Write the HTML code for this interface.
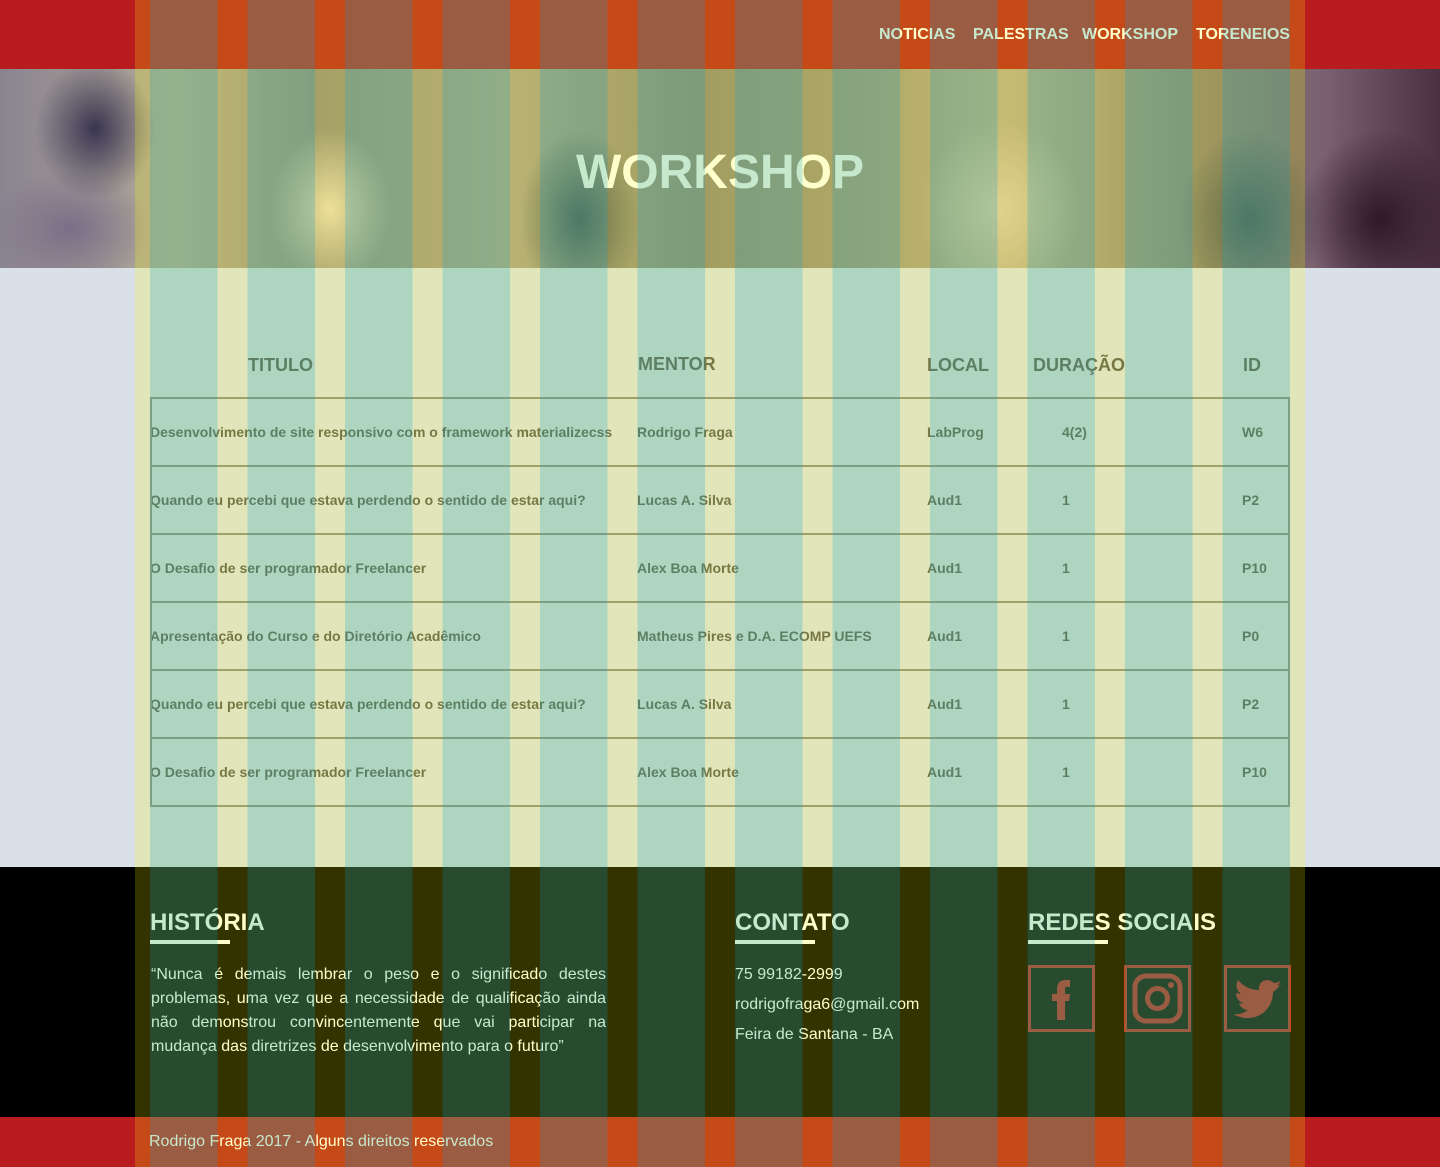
<!DOCTYPE html>
<html><head><meta charset="utf-8"><style>
*{margin:0;padding:0;box-sizing:border-box}
body{width:1440px;height:1167px;position:relative;background:#d9e0e8;font-family:"Liberation Sans",Arial,sans-serif;overflow:hidden}
header{position:absolute;top:0;left:0;width:1440px;height:69px;background:#b81c1e}
nav{position:absolute;top:26px;left:879px;font-size:16px;font-weight:bold;color:#fff;white-space:nowrap}
nav span{position:absolute}
.hero{position:absolute;top:69px;left:0;width:1440px;height:199px;
background:
radial-gradient(ellipse 60px 70px at 95px 60px,#3a3550 0%,transparent 100%),
radial-gradient(ellipse 80px 60px at 70px 160px,#7a6f88 0%,transparent 100%),
radial-gradient(ellipse 60px 80px at 330px 140px,#e8d8c0 0%,transparent 100%),
radial-gradient(ellipse 60px 90px at 580px 150px,#3a4a55 0%,transparent 100%),
radial-gradient(ellipse 80px 90px at 1000px 140px,#d8c8b0 0%,transparent 100%),
radial-gradient(ellipse 70px 90px at 1250px 150px,#3a4a58 0%,transparent 100%),
radial-gradient(ellipse 80px 90px at 1380px 150px,#301828 0%,transparent 100%),
linear-gradient(90deg,#8a8490 0%,#b0a898 12%,#8f8a80 22%,#a8a090 35%,#8a8478 48%,#9a9280 60%,#b8aa90 70%,#8a8478 82%,#7a6070 92%,#4a3040 100%)}
.hero h1{position:absolute;top:76px;left:0;width:1440px;text-align:center;color:#fff;font-size:48px;font-weight:bold}
.th{position:absolute;top:355px;font-size:18px;font-weight:bold;color:#555}
table{position:absolute;top:397px;left:150px;width:1140px;border-collapse:collapse;table-layout:fixed}
td{height:68px;border-top:2px solid #888;border-bottom:2px solid #888;font-size:14px;font-weight:bold;color:#555;padding:0;vertical-align:middle;white-space:nowrap}
.tbl{position:absolute;top:397px;left:150px;width:1140px;height:410px;border-left:2px solid #888;border-right:2px solid #888;pointer-events:none}
footer{position:absolute;top:867px;left:0;width:1440px;height:250px;background:#000;color:#fff}
footer h2{position:absolute;top:42px;font-size:24px;font-weight:bold}
footer .ul{position:absolute;top:73px;width:80px;height:4px;background:#fff}
footer p{position:absolute;font-size:16px;line-height:24px}
.ic{position:absolute;top:98px;width:67px;height:67px;border:3px solid #b81c1e}
.bot{position:absolute;top:1117px;left:0;width:1440px;height:50px;background:#b81c1e;color:#fff;font-size:16px}
.bot span{position:absolute;left:149px;top:16px}
.grid{position:absolute;top:0;left:135px;width:1170px;height:1167px;pointer-events:none;
background:repeating-linear-gradient(90deg,rgba(255,255,0,.2) 0,rgba(255,255,0,.2) 15px,rgba(105,195,124,.38) 15px,rgba(105,195,124,.38) 82.5px,rgba(255,255,0,.2) 82.5px,rgba(255,255,0,.2) 97.5px)}
</style></head><body>
<header><nav><span style="left:0">NOTICIAS</span><span style="left:94px">PALESTRAS</span><span style="left:203px">WORKSHOP</span><span style="left:317px">TORENEIOS</span></nav></header>
<div class="hero"><h1>WORKSHOP</h1></div>
<div class="th" style="left:248px">TITULO</div>
<div class="th" style="left:638px;top:354px">MENTOR</div>
<div class="th" style="left:927px">LOCAL</div>
<div class="th" style="left:1033px">DURAÇÃO</div>
<div class="th" style="left:1243px">ID</div>
<table>
<colgroup><col style="width:487px"><col style="width:290px"><col style="width:135px"><col style="width:180px"><col style="width:48px"></colgroup>
<tr><td>Desenvolvimento de site responsivo com o framework materializecss</td><td>Rodrigo Fraga</td><td>LabProg</td><td>4(2)</td><td>W6</td></tr>
<tr><td>Quando eu percebi que estava perdendo o sentido de estar aqui?</td><td>Lucas A. Silva</td><td>Aud1</td><td>1</td><td>P2</td></tr>
<tr><td>O Desafio de ser programador Freelancer</td><td>Alex Boa Morte</td><td>Aud1</td><td>1</td><td>P10</td></tr>
<tr><td>Apresentação do Curso e do Diretório Acadêmico</td><td>Matheus Pires e D.A. ECOMP UEFS</td><td>Aud1</td><td>1</td><td>P0</td></tr>
<tr><td>Quando eu percebi que estava perdendo o sentido de estar aqui?</td><td>Lucas A. Silva</td><td>Aud1</td><td>1</td><td>P2</td></tr>
<tr><td>O Desafio de ser programador Freelancer</td><td>Alex Boa Morte</td><td>Aud1</td><td>1</td><td>P10</td></tr>
</table>
<div class="tbl"></div>
<footer>
<h2 style="left:150px">HISTÓRIA</h2><div class="ul" style="left:150px"></div>
<p style="left:151px;top:96px;width:455px;text-align:justify">“Nunca é demais lembrar o peso e o significado destes problemas, uma vez que a necessidade de qualificação ainda não demonstrou convincentemente que vai participar na mudança das diretrizes de desenvolvimento para o futuro”</p>
<h2 style="left:735px">CONTATO</h2><div class="ul" style="left:735px"></div>
<p style="left:735px;line-height:30px;top:93px">75 99182-2999<br>rodrigofraga6@gmail.com<br>Feira de Santana - BA</p>
<h2 style="left:1028px">REDES SOCIAIS</h2><div class="ul" style="left:1028px"></div>
<div class="ic" style="left:1028px"><svg width="61" height="61" viewBox="0 0 61 61"><path d="M26 52V33h-5v-7h5v-5c0-6 3-9 9-9h4v7h-3c-2 0-2 1-2 2v5h5l-1 7h-4v19z" fill="#b81c1e"/></svg></div>
<div class="ic" style="left:1124px"><svg width="61" height="61" viewBox="0 0 61 61"><rect x="8" y="8" width="45" height="45" rx="11" fill="none" stroke="#b81c1e" stroke-width="5"/><circle cx="30.5" cy="30.5" r="10" fill="none" stroke="#b81c1e" stroke-width="5"/><circle cx="44" cy="17" r="3" fill="#b81c1e"/></svg></div>
<div class="ic" style="left:1224px"><svg width="61" height="61" viewBox="0 0 61 61"><path d="M55 16c-2 1-4 1-6 2 2-1 4-3 4-5-2 1-4 2-6 2-4-4-11-4-14 1-1 2-1 4-1 6-9 0-16-4-21-10-3 5-1 11 3 14-2 0-3-1-5-1 0 5 3 9 8 10-2 0-3 1-5 0 1 4 5 7 9 7-4 3-9 5-15 4 17 10 38 1 40-20v-2c3-2 5-4 6-6z" fill="#b81c1e"/></svg></div>
</footer>
<div class="bot"><span>Rodrigo Fraga 2017 - Alguns direitos reservados</span></div>
<div class="grid"></div>
</body></html>
